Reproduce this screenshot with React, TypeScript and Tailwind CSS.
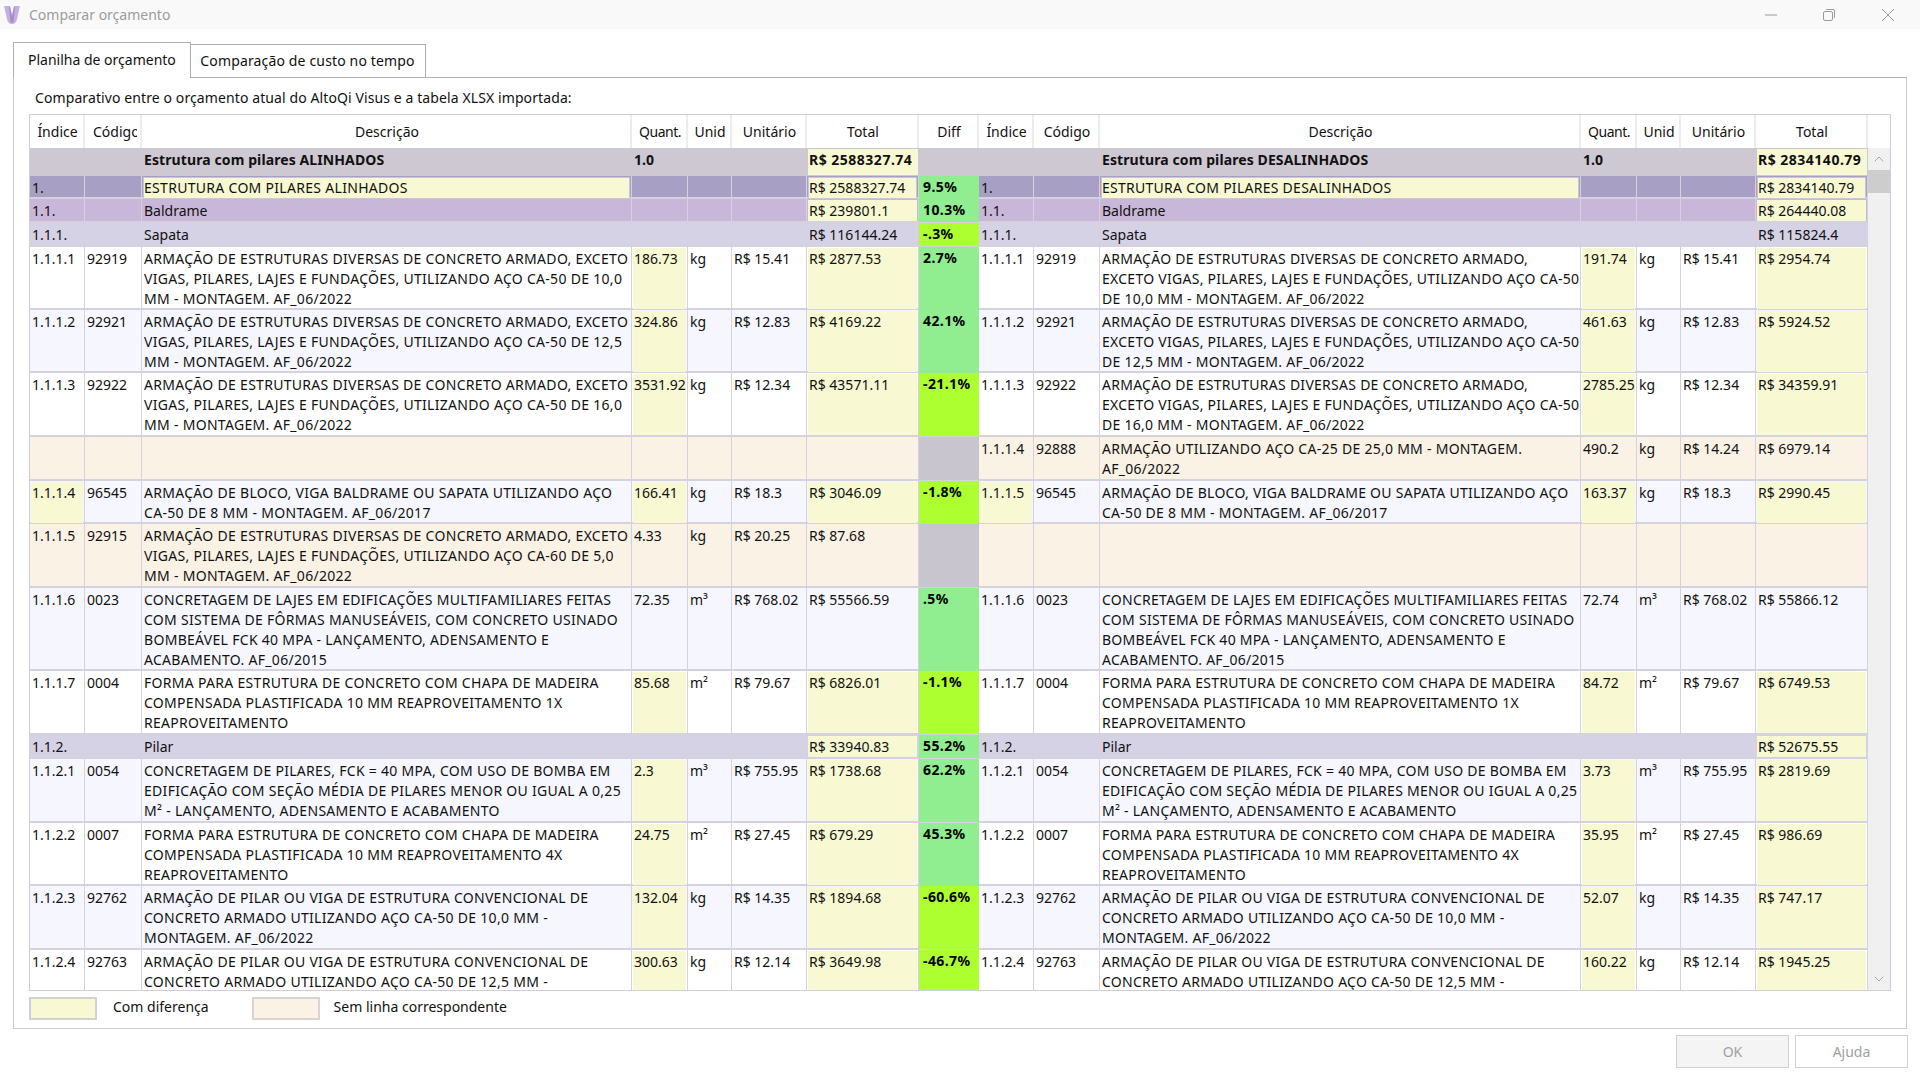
import { ChevronDown, ChevronUp } from "lucide-react";

const GRID =
  "grid grid-cols-[55px_57px_490px_56px_44px_75px_112px_60px_55px_66px_481px_56px_44px_75px_112px]";

type Kind = "head" | "l1" | "l2" | "l3" | "white" | "alt" | "none";

interface RowType {
  h: string;
  kind: Kind;
  cells: string[];
  yellow?: number[];
  lime?: boolean;
}

const KIND_BG: Record<Kind, string> = {
  head: "bg-[#cdc8d2] font-bold",
  l1: "bg-[#a89fc4]",
  l2: "bg-[#c9b7d9]",
  l3: "bg-[#d6d2e6]",
  white: "bg-white",
  alt: "bg-[#f6f7fe]",
  none: "bg-[#fbf2e6]",
};

const QT = [3, 6, 11, 14];

const rows: RowType[] = [
  {
    h: "h-[28px]",
    kind: "head",
    yellow: [6, 14],
    cells: ["", "", "Estrutura com pilares ALINHADOS", "1.0", "", "", "R$ 2588327.74", "", "", "", "Estrutura com pilares DESALINHADOS", "1.0", "", "", "R$ 2834140.79"],
  },
  {
    h: "h-[23px]",
    kind: "l1",
    yellow: [2, 6, 10, 14],
    cells: ["1.", "", "ESTRUTURA COM PILARES ALINHADOS", "", "", "", "R$ 2588327.74", "9.5%", "1.", "", "ESTRUTURA COM PILARES DESALINHADOS", "", "", "", "R$ 2834140.79"],
  },
  {
    h: "h-[24px]",
    kind: "l2",
    yellow: [6, 14],
    cells: ["1.1.", "", "Baldrame", "", "", "", "R$ 239801.1", "10.3%", "1.1.", "", "Baldrame", "", "", "", "R$ 264440.08"],
  },
  {
    h: "h-[24px]",
    kind: "l3",
    lime: true,
    cells: ["1.1.1.", "", "Sapata", "", "", "", "R$ 116144.24", "-.3%", "1.1.1.", "", "Sapata", "", "", "", "R$ 115824.4"],
  },
  {
    h: "h-[63px]",
    kind: "white",
    yellow: QT,
    cells: ["1.1.1.1", "92919", "ARMAÇÃO DE ESTRUTURAS DIVERSAS DE CONCRETO ARMADO, EXCETO\nVIGAS, PILARES, LAJES E FUNDAÇÕES, UTILIZANDO AÇO CA-50 DE 10,0\nMM - MONTAGEM. AF_06/2022", "186.73", "kg", "R$ 15.41", "R$ 2877.53", "2.7%", "1.1.1.1", "92919", "ARMAÇÃO DE ESTRUTURAS DIVERSAS DE CONCRETO ARMADO,\nEXCETO VIGAS, PILARES, LAJES E FUNDAÇÕES, UTILIZANDO AÇO CA-50\nDE 10,0 MM - MONTAGEM. AF_06/2022", "191.74", "kg", "R$ 15.41", "R$ 2954.74"],
  },
  {
    h: "h-[63px]",
    kind: "alt",
    yellow: QT,
    cells: ["1.1.1.2", "92921", "ARMAÇÃO DE ESTRUTURAS DIVERSAS DE CONCRETO ARMADO, EXCETO\nVIGAS, PILARES, LAJES E FUNDAÇÕES, UTILIZANDO AÇO CA-50 DE 12,5\nMM - MONTAGEM. AF_06/2022", "324.86", "kg", "R$ 12.83", "R$ 4169.22", "42.1%", "1.1.1.2", "92921", "ARMAÇÃO DE ESTRUTURAS DIVERSAS DE CONCRETO ARMADO,\nEXCETO VIGAS, PILARES, LAJES E FUNDAÇÕES, UTILIZANDO AÇO CA-50\nDE 12,5 MM - MONTAGEM. AF_06/2022", "461.63", "kg", "R$ 12.83", "R$ 5924.52"],
  },
  {
    h: "h-[64px]",
    kind: "white",
    yellow: QT,
    lime: true,
    cells: ["1.1.1.3", "92922", "ARMAÇÃO DE ESTRUTURAS DIVERSAS DE CONCRETO ARMADO, EXCETO\nVIGAS, PILARES, LAJES E FUNDAÇÕES, UTILIZANDO AÇO CA-50 DE 16,0\nMM - MONTAGEM. AF_06/2022", "3531.92", "kg", "R$ 12.34", "R$ 43571.11", "-21.1%", "1.1.1.3", "92922", "ARMAÇÃO DE ESTRUTURAS DIVERSAS DE CONCRETO ARMADO,\nEXCETO VIGAS, PILARES, LAJES E FUNDAÇÕES, UTILIZANDO AÇO CA-50\nDE 16,0 MM - MONTAGEM. AF_06/2022", "2785.25", "kg", "R$ 12.34", "R$ 34359.91"],
  },
  {
    h: "h-[44px]",
    kind: "none",
    cells: ["", "", "", "", "", "", "", "", "1.1.1.4", "92888", "ARMAÇÃO UTILIZANDO AÇO CA-25 DE 25,0 MM - MONTAGEM.\nAF_06/2022", "490.2", "kg", "R$ 14.24", "R$ 6979.14"],
  },
  {
    h: "h-[43px]",
    kind: "alt",
    yellow: [0, 3, 6, 8, 11, 14],
    lime: true,
    cells: ["1.1.1.4", "96545", "ARMAÇÃO DE BLOCO, VIGA BALDRAME OU SAPATA UTILIZANDO AÇO\nCA-50 DE 8 MM - MONTAGEM. AF_06/2017", "166.41", "kg", "R$ 18.3", "R$ 3046.09", "-1.8%", "1.1.1.5", "96545", "ARMAÇÃO DE BLOCO, VIGA BALDRAME OU SAPATA UTILIZANDO AÇO\nCA-50 DE 8 MM - MONTAGEM. AF_06/2017", "163.37", "kg", "R$ 18.3", "R$ 2990.45"],
  },
  {
    h: "h-[64px]",
    kind: "none",
    cells: ["1.1.1.5", "92915", "ARMAÇÃO DE ESTRUTURAS DIVERSAS DE CONCRETO ARMADO, EXCETO\nVIGAS, PILARES, LAJES E FUNDAÇÕES, UTILIZANDO AÇO CA-60 DE 5,0\nMM - MONTAGEM. AF_06/2022", "4.33", "kg", "R$ 20.25", "R$ 87.68", "", "", "", "", "", "", "", ""],
  },
  {
    h: "h-[83px]",
    kind: "alt",
    cells: ["1.1.1.6", "0023", "CONCRETAGEM DE LAJES EM EDIFICAÇÕES MULTIFAMILIARES FEITAS\nCOM SISTEMA DE FÔRMAS MANUSEÁVEIS, COM CONCRETO USINADO\nBOMBEÁVEL FCK 40 MPA - LANÇAMENTO, ADENSAMENTO E\nACABAMENTO. AF_06/2015", "72.35", "m³", "R$ 768.02", "R$ 55566.59", ".5%", "1.1.1.6", "0023", "CONCRETAGEM DE LAJES EM EDIFICAÇÕES MULTIFAMILIARES FEITAS\nCOM SISTEMA DE FÔRMAS MANUSEÁVEIS, COM CONCRETO USINADO\nBOMBEÁVEL FCK 40 MPA - LANÇAMENTO, ADENSAMENTO E\nACABAMENTO. AF_06/2015", "72.74", "m³", "R$ 768.02", "R$ 55866.12"],
  },
  {
    h: "h-[64px]",
    kind: "white",
    yellow: QT,
    lime: true,
    cells: ["1.1.1.7", "0004", "FORMA PARA ESTRUTURA DE CONCRETO COM CHAPA DE MADEIRA\nCOMPENSADA PLASTIFICADA 10 MM REAPROVEITAMENTO 1X\nREAPROVEITAMENTO", "85.68", "m²", "R$ 79.67", "R$ 6826.01", "-1.1%", "1.1.1.7", "0004", "FORMA PARA ESTRUTURA DE CONCRETO COM CHAPA DE MADEIRA\nCOMPENSADA PLASTIFICADA 10 MM REAPROVEITAMENTO 1X\nREAPROVEITAMENTO", "84.72", "m²", "R$ 79.67", "R$ 6749.53"],
  },
  {
    h: "h-[24px]",
    kind: "l3",
    yellow: [6, 14],
    cells: ["1.1.2.", "", "Pilar", "", "", "", "R$ 33940.83", "55.2%", "1.1.2.", "", "Pilar", "", "", "", "R$ 52675.55"],
  },
  {
    h: "h-[64px]",
    kind: "alt",
    yellow: QT,
    cells: ["1.1.2.1", "0054", "CONCRETAGEM DE PILARES, FCK = 40 MPA, COM USO DE BOMBA EM\nEDIFICAÇÃO COM SEÇÃO MÉDIA DE PILARES MENOR OU IGUAL A 0,25\nM² - LANÇAMENTO, ADENSAMENTO E ACABAMENTO", "2.3", "m³", "R$ 755.95", "R$ 1738.68", "62.2%", "1.1.2.1", "0054", "CONCRETAGEM DE PILARES, FCK = 40 MPA, COM USO DE BOMBA EM\nEDIFICAÇÃO COM SEÇÃO MÉDIA DE PILARES MENOR OU IGUAL A 0,25\nM² - LANÇAMENTO, ADENSAMENTO E ACABAMENTO", "3.73", "m³", "R$ 755.95", "R$ 2819.69"],
  },
  {
    h: "h-[63px]",
    kind: "white",
    yellow: QT,
    cells: ["1.1.2.2", "0007", "FORMA PARA ESTRUTURA DE CONCRETO COM CHAPA DE MADEIRA\nCOMPENSADA PLASTIFICADA 10 MM REAPROVEITAMENTO 4X\nREAPROVEITAMENTO", "24.75", "m²", "R$ 27.45", "R$ 679.29", "45.3%", "1.1.2.2", "0007", "FORMA PARA ESTRUTURA DE CONCRETO COM CHAPA DE MADEIRA\nCOMPENSADA PLASTIFICADA 10 MM REAPROVEITAMENTO 4X\nREAPROVEITAMENTO", "35.95", "m²", "R$ 27.45", "R$ 986.69"],
  },
  {
    h: "h-[64px]",
    kind: "alt",
    yellow: QT,
    lime: true,
    cells: ["1.1.2.3", "92762", "ARMAÇÃO DE PILAR OU VIGA DE ESTRUTURA CONVENCIONAL DE\nCONCRETO ARMADO UTILIZANDO AÇO CA-50 DE 10,0 MM -\nMONTAGEM. AF_06/2022", "132.04", "kg", "R$ 14.35", "R$ 1894.68", "-60.6%", "1.1.2.3", "92762", "ARMAÇÃO DE PILAR OU VIGA DE ESTRUTURA CONVENCIONAL DE\nCONCRETO ARMADO UTILIZANDO AÇO CA-50 DE 10,0 MM -\nMONTAGEM. AF_06/2022", "52.07", "kg", "R$ 14.35", "R$ 747.17"],
  },
  {
    h: "h-[64px]",
    kind: "white",
    yellow: QT,
    lime: true,
    cells: ["1.1.2.4", "92763", "ARMAÇÃO DE PILAR OU VIGA DE ESTRUTURA CONVENCIONAL DE\nCONCRETO ARMADO UTILIZANDO AÇO CA-50 DE 12,5 MM -", "300.63", "kg", "R$ 12.14", "R$ 3649.98", "-46.7%", "1.1.2.4", "92763", "ARMAÇÃO DE PILAR OU VIGA DE ESTRUTURA CONVENCIONAL DE\nCONCRETO ARMADO UTILIZANDO AÇO CA-50 DE 12,5 MM -", "160.22", "kg", "R$ 12.14", "R$ 1945.25"],
  },
];

const headers = ["Índice", "Código", "Descrição", "Quant.", "Unid", "Unitário", "Total", "Diff", "Índice", "Código", "Descrição", "Quant.", "Unid", "Unitário", "Total"];

function Row({ row }: { row: RowType }) {
  const isHead = row.kind === "head";
  const upperDesc = row.kind === "white" || row.kind === "alt" || row.kind === "none" || row.kind === "l1";
  return (
    <div className={`${GRID} ${row.h} ${KIND_BG[row.kind]} ${isHead ? "" : "border-b-2 border-[#d5d1de]"}`}>
      {row.cells.map((text, i) => {
        if (i === 7) {
          const empty = text === "" && row.kind === "none";
          const bg = isHead
            ? ""
            : empty
              ? "bg-[#c9c5cf]"
              : row.lime
                ? "bg-[#adff2f]"
                : "bg-[#90ee90]";
          return (
            <div key={i} className={`${bg} pl-[4px] pt-[1px] font-bold tracking-[0.4px] text-black`}>
              {text}
            </div>
          );
        }
        const yellow = row.yellow?.includes(i);
        const outlined = yellow && row.kind === "l1";
        const isTotal = i === 6 || i === 14;
        return (
          <div key={i} className={`p-px ${isHead ? "" : "border-r border-[#d5d1de]"}`}>
            <div
              className={`h-full whitespace-pre ${outlined ? "border border-[#cac6d8] bg-[#f8f9d2]" : "pl-px pt-[1px]"} ${yellow ? "bg-[#f8f9d2]" : ""} ${i === 2 && upperDesc ? "tracking-[0.3px]" : ""} ${i === 10 && upperDesc ? "tracking-[0.27px]" : ""} ${(i === 2 || i === 10) && isHead ? "tracking-[0.1px]" : ""} ${isTotal && isHead ? "tracking-[0.5px]" : ""}`}
            >
              {text}
            </div>
          </div>
        );
      })}
    </div>
  );
}

function Scrollbar() {
  return (
    <div className="flex w-[22px] flex-col items-center bg-[#f0f0f0]">
      <div className="flex h-[22px] w-full items-center justify-center">
        <ChevronUp className="h-4 w-4 text-[#a8a8a8]" strokeWidth={1.5} />
      </div>
      <div className="h-[23px] w-full bg-[#cdcdcd]" />
      <div className="flex-1" />
      <div className="flex h-[22px] w-full items-center justify-center">
        <ChevronDown className="h-4 w-4 text-[#a8a8a8]" strokeWidth={1.5} />
      </div>
    </div>
  );
}

export default function App() {
  return (
    <div className="flex h-[1080px] w-[1920px] flex-col overflow-hidden bg-white font-['Noto_Sans',sans-serif] text-[14px]/[20px] text-[#111]">
      {/* title bar */}
      <div className="flex h-[29px] items-center bg-[#f9f9f9]">
        <svg viewBox="0 0 16 18" className="ml-[4px] h-[18px] w-[16px]">
          <path d="M0 0 H6 L8 9 L10 0 H16 L13 13 Q12 18 8 18 Q4 18 3 13 Z" fill="#c4afe0" />
          <path d="M6 1 L8 10 L10 1 L11 1 L9.5 16 Q8 17 6.5 16 L5 1 Z" fill="#a98cca" />
        </svg>
        <span className="ml-[9px] text-[#9c9c9c]">Comparar orçamento</span>
        <div className="ml-auto flex items-center">
          <svg viewBox="0 0 14 14" className="h-[14px] w-[14px]">
            <path d="M1 7 H13" stroke="#9a9a9a" strokeWidth="1" />
          </svg>
          <svg viewBox="0 0 14 14" className="ml-[44px] h-[14px] w-[14px]">
            <rect x="1.5" y="3.5" width="9" height="9" rx="1.5" fill="none" stroke="#9a9a9a" />
            <path d="M4 2 Q4 1.5 5 1.5 H11 Q12.5 1.5 12.5 3 V9 Q12.5 10 12 10" fill="none" stroke="#9a9a9a" />
          </svg>
          <svg viewBox="0 0 14 14" className="ml-[45px] mr-[25px] h-[14px] w-[14px]">
            <path d="M1 1 L13 13 M13 1 L1 13" stroke="#9a9a9a" strokeWidth="1" />
          </svg>
        </div>
      </div>

      {/* tabs */}
      <div className="mt-[13px] flex items-end pl-[13px]">
        <div className="relative z-10 -mb-px flex h-[36px] w-[178px] items-start border-x border-t border-[#b0b0b0] bg-white pl-[14px] pt-[7px]">
          Planilha de orçamento
        </div>
        <div className="flex h-[33px] w-[235px] items-center justify-center border-r border-t border-[#b0b0b0] bg-white pb-[1px] pr-px tracking-[0.15px]">
          Comparação de custo no tempo
        </div>
      </div>

      {/* panel */}
      <div className="ml-[13px] flex h-[952px] w-[1894px] flex-col border border-[#cccccc] border-t-[#b0b0b0] pl-[15px]">
        <div className="pl-[6px] pt-[10px] tracking-[0.1px]">Comparativo entre o orçamento atual do AltoQi Visus e a tabela XLSX importada:</div>

        <div className="mt-[6px] w-[1862px] border border-[#d0ccdc]">
          <div className="flex h-[33px] bg-white">
            <div className={`${GRID} h-full`}>
              {headers.map((h, i) => (
                <div
                  key={i}
                  className={`flex items-center justify-center border-r-2 border-[#ececec] pl-[2px] ${i === 3 || i === 11 ? "tracking-[-0.5px]" : ""}`}
                >
                  {i === 1 ? (
                    <span className="ml-[6px] mr-[3px] w-full overflow-hidden whitespace-nowrap">{h}</span>
                  ) : (
                    h
                  )}
                </div>
              ))}
            </div>
          </div>
          <div className="flex h-[842px] overflow-hidden">
            <div className="w-[1838px]">
              {rows.map((r, i) => (
                <Row key={i} row={r} />
              ))}
            </div>
            <Scrollbar />
          </div>
        </div>

        {/* legend */}
        <div className="mt-[6px] flex items-center">
          <div className="h-[23px] w-[68px] border-2 border-[#d2d2d2] bg-[#f8f9d2]" />
          <span className="ml-[16px] pb-[3px]">Com diferença</span>
          <div className="ml-[43px] h-[23px] w-[68px] border-2 border-[#d8d4cf] bg-[#fbf2e6]" />
          <span className="ml-[14px] pb-[3px]">Sem linha correspondente</span>
        </div>
      </div>

      {/* buttons */}
      <div className="mt-[6px] flex justify-end gap-[6px] pr-[12px] text-[#a0a0a0]">
        <div className="flex h-[33px] w-[113px] items-center justify-center border border-[#d0d0d0] bg-[#f4f4f4]">OK</div>
        <div className="flex h-[33px] w-[113px] items-center justify-center border border-[#d0d0d0] bg-white">Ajuda</div>
      </div>
    </div>
  );
}
